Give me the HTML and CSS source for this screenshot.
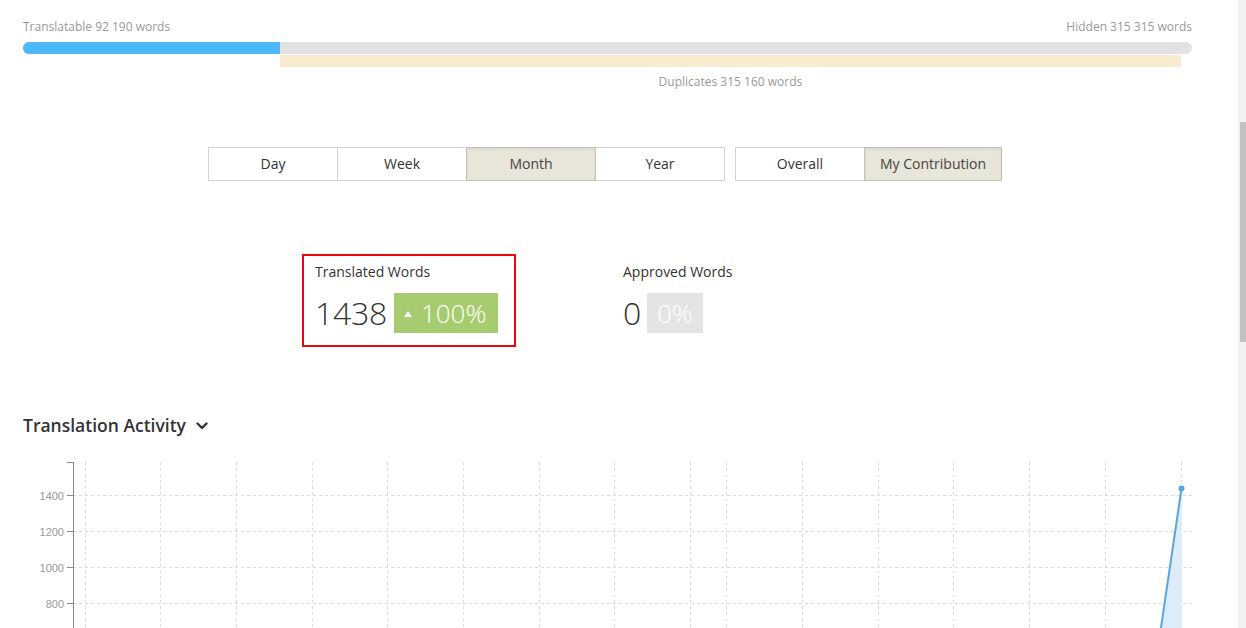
FILE: index.html
```html
<!DOCTYPE html>
<html lang="en">
<head>
<meta charset="utf-8">
<title>Project reports</title>
<link rel="stylesheet" href="styles.css">
</head>
<body>
<div class="page">
  <div class="words-row">
    <span>Translatable 92 190 words</span>
    <span>Hidden 315 315 words</span>
  </div>
  <div class="track"><div class="fill" style="width:21.98%"></div></div>
  <div class="dup-wrap" style="margin-left:21.98%;width:77.07%">
    <div class="dup-bar"></div>
    <div class="dup-label">Duplicates 315 160 words</div>
  </div>

  <div class="toggles">
    <div class="btn-group">
      <button class="btn">Day</button>
      <button class="btn">Week</button>
      <button class="btn active">Month</button>
      <button class="btn">Year</button>
    </div>
    <div class="btn-group">
      <button class="btn">Overall</button>
      <button class="btn active wide">My Contribution</button>
    </div>
  </div>

  <div class="stats">
    <div class="stat-col">
      <div class="stat highlight">
        <div class="stat-label">Translated Words</div>
        <div class="stat-value">
          <span class="num">1438</span>
          <span class="badge up"><svg class="tri" width="8" height="6" viewBox="0 0 8 6"><path d="M4 0 L8 6 L0 6 Z" fill="#fff"/></svg>100%</span>
        </div>
      </div>
    </div>
    <div class="stat-col">
      <div class="stat">
        <div class="stat-label">Approved Words</div>
        <div class="stat-value">
          <span class="num">0</span>
          <span class="badge zero">0%</span>
        </div>
      </div>
    </div>
  </div>

  <h2 class="section-title">Translation Activity
    <svg class="chev" width="12" height="8" viewBox="0 0 12 8"><path d="M1.5 1.5 L6 6 L10.5 1.5" fill="none" stroke="#333" stroke-width="2.4" stroke-linecap="round" stroke-linejoin="round"/></svg>
  </h2>

  <svg class="chart" width="1169" height="180" viewBox="0 0 1169 180">
    <g stroke="#dcdcdc" stroke-width="1" stroke-dasharray="3 3">
      <line x1="62.5" y1="7" x2="62.5" y2="180"/>
      <line x1="137.5" y1="7" x2="137.5" y2="180"/>
      <line x1="213.5" y1="7" x2="213.5" y2="180"/>
      <line x1="289.5" y1="7" x2="289.5" y2="180"/>
      <line x1="364.5" y1="7" x2="364.5" y2="180"/>
      <line x1="440.5" y1="7" x2="440.5" y2="180"/>
      <line x1="516.5" y1="7" x2="516.5" y2="180"/>
      <line x1="591.5" y1="7" x2="591.5" y2="180"/>
      <line x1="667.5" y1="7" x2="667.5" y2="180"/>
      <line x1="703.5" y1="7" x2="703.5" y2="180"/>
      <line x1="779.5" y1="7" x2="779.5" y2="180"/>
      <line x1="855.5" y1="7" x2="855.5" y2="180"/>
      <line x1="930.5" y1="7" x2="930.5" y2="180"/>
      <line x1="1006.5" y1="7" x2="1006.5" y2="180"/>
      <line x1="1082.5" y1="7" x2="1082.5" y2="180"/>
      <line x1="1158.5" y1="7" x2="1158.5" y2="180"/>
      <line x1="50" y1="40.5" x2="1169" y2="40.5"/>
      <line x1="50" y1="76.5" x2="1169" y2="76.5"/>
      <line x1="50" y1="112.5" x2="1169" y2="112.5"/>
      <line x1="50" y1="148.5" x2="1169" y2="148.5"/>
    </g>
    <g stroke="#888" stroke-width="1">
      <line x1="50.5" y1="7" x2="50.5" y2="180"/>
      <line x1="44" y1="7.5" x2="50.5" y2="7.5"/>
      <line x1="44" y1="40.5" x2="50" y2="40.5"/>
      <line x1="44" y1="76.5" x2="50" y2="76.5"/>
      <line x1="44" y1="112.5" x2="50" y2="112.5"/>
      <line x1="44" y1="148.5" x2="50" y2="148.5"/>
    </g>
    <g class="axis-label" text-anchor="end">
      <text x="41" y="44.5">1400</text>
      <text x="41" y="80.5">1200</text>
      <text x="41" y="116.5">1000</text>
      <text x="41" y="152.5">800</text>
    </g>
    <polygon points="1136.9,180 1158.5,33.5 1158.5,180" fill="#ddecfb"/>
    <polyline points="1136.9,180 1158.5,33.5" fill="none" stroke="#5aa5dc" stroke-width="2"/>
    <circle cx="1158.5" cy="33.5" r="3" fill="#5aa5dc"/>
  </svg>
</div>
<div class="scrollbar"><div class="thumb"></div></div>
</body>
</html>
```

FILE: styles.css
```css
* { box-sizing: border-box; }

html, body {
  margin: 0;
  height: 628px;
  overflow: hidden;
  background: #fff;
}

body {
  display: flex;
  font-family: "Open Sans", "Liberation Sans", sans-serif;
  color: #333;
}

.page {
  flex: 1;
  min-width: 0;
  padding: 18px 46px 0 23px;
}

.words-row {
  display: flex;
  justify-content: space-between;
  font-size: 12px;
  line-height: 18px;
  color: #999;
}

.track {
  margin-top: 6px;
  height: 12px;
  border-radius: 6px;
  background: #e2e2e2;
  overflow: hidden;
}

.fill {
  height: 100%;
  background: #4db8fb;
}

.dup-wrap {
  margin-top: 1px;
}

.dup-bar {
  height: 12px;
  background: #f8ebd0;
}

.dup-label {
  margin-top: 6px;
  text-align: center;
  font-size: 12px;
  line-height: 18px;
  color: #999;
}

.toggles {
  display: flex;
  justify-content: center;
  gap: 10px;
  margin-top: 56px;
  padding-right: 5px;
}

.btn-group {
  display: flex;
}

.btn {
  width: 130px;
  height: 34px;
  margin: 0;
  padding: 0;
  border: 1px solid #d3d3d3;
  background: #fff;
  font-family: "Open Sans", "Liberation Sans", sans-serif;
  font-size: 14px;
  line-height: 32px;
  color: #333;
  position: relative;
}

.btn + .btn {
  margin-left: -1px;
}

.btn.wide {
  width: 138px;
}

.btn.active {
  background: #e8e5d9;
  border-color: #c4c1b5;
  color: #444;
  box-shadow: inset 0 1px 3px rgba(0, 0, 0, 0.08);
  z-index: 1;
}

.stats {
  display: flex;
  margin-top: 73px;
  padding-left: 279px;
}

.stat-col {
  width: 308px;
}

.stat {
  display: inline-block;
  border: 2px solid transparent;
  padding: 6px 16px 12px 11px;
}

.stat.highlight {
  border-color: #e8070b;
}

.stat-label {
  font-size: 14px;
  line-height: 20px;
  color: #333;
}

.stat-value {
  display: flex;
  align-items: center;
  margin-top: 11px;
  height: 40px;
}

.num {
  font-size: 32px;
  font-weight: 300;
  line-height: 40px;
  color: #333;
  margin-right: 7px;
  letter-spacing: -0.3px;
}

.badge {
  display: inline-flex;
  align-items: center;
  height: 40px;
  padding: 0 11px;
  font-size: 26px;
  font-weight: 300;
  color: #fff;
}

.badge.up {
  background: #a7cc6f;
  padding-left: 10px;
  padding-right: 12px;
}

.badge.zero {
  background: #e4e4e4;
  padding: 0 10px;
  margin-left: -1px;
}

.tri {
  margin-right: 9px;
  margin-top: 1px;
}

.section-title {
  display: flex;
  align-items: center;
  margin: 66px 0 0;
  font-size: 17.5px;
  font-weight: 600;
  line-height: 24px;
  color: #333;
}

.chev {
  margin-left: 10px;
  margin-top: 1px;
}

.chart {
  display: block;
  margin-top: 18px;
}

.axis-label {
  font-family: "Liberation Sans", Arial, sans-serif;
  font-size: 11px;
  fill: #999;
}

.scrollbar {
  width: 8px;
  flex: none;
  background: #f1f1f1;
  display: flex;
  flex-direction: column;
  align-items: flex-end;
}

.thumb {
  margin-top: 122px;
  width: 6px;
  height: 220px;
  background: #c1c1c1;
}
```
